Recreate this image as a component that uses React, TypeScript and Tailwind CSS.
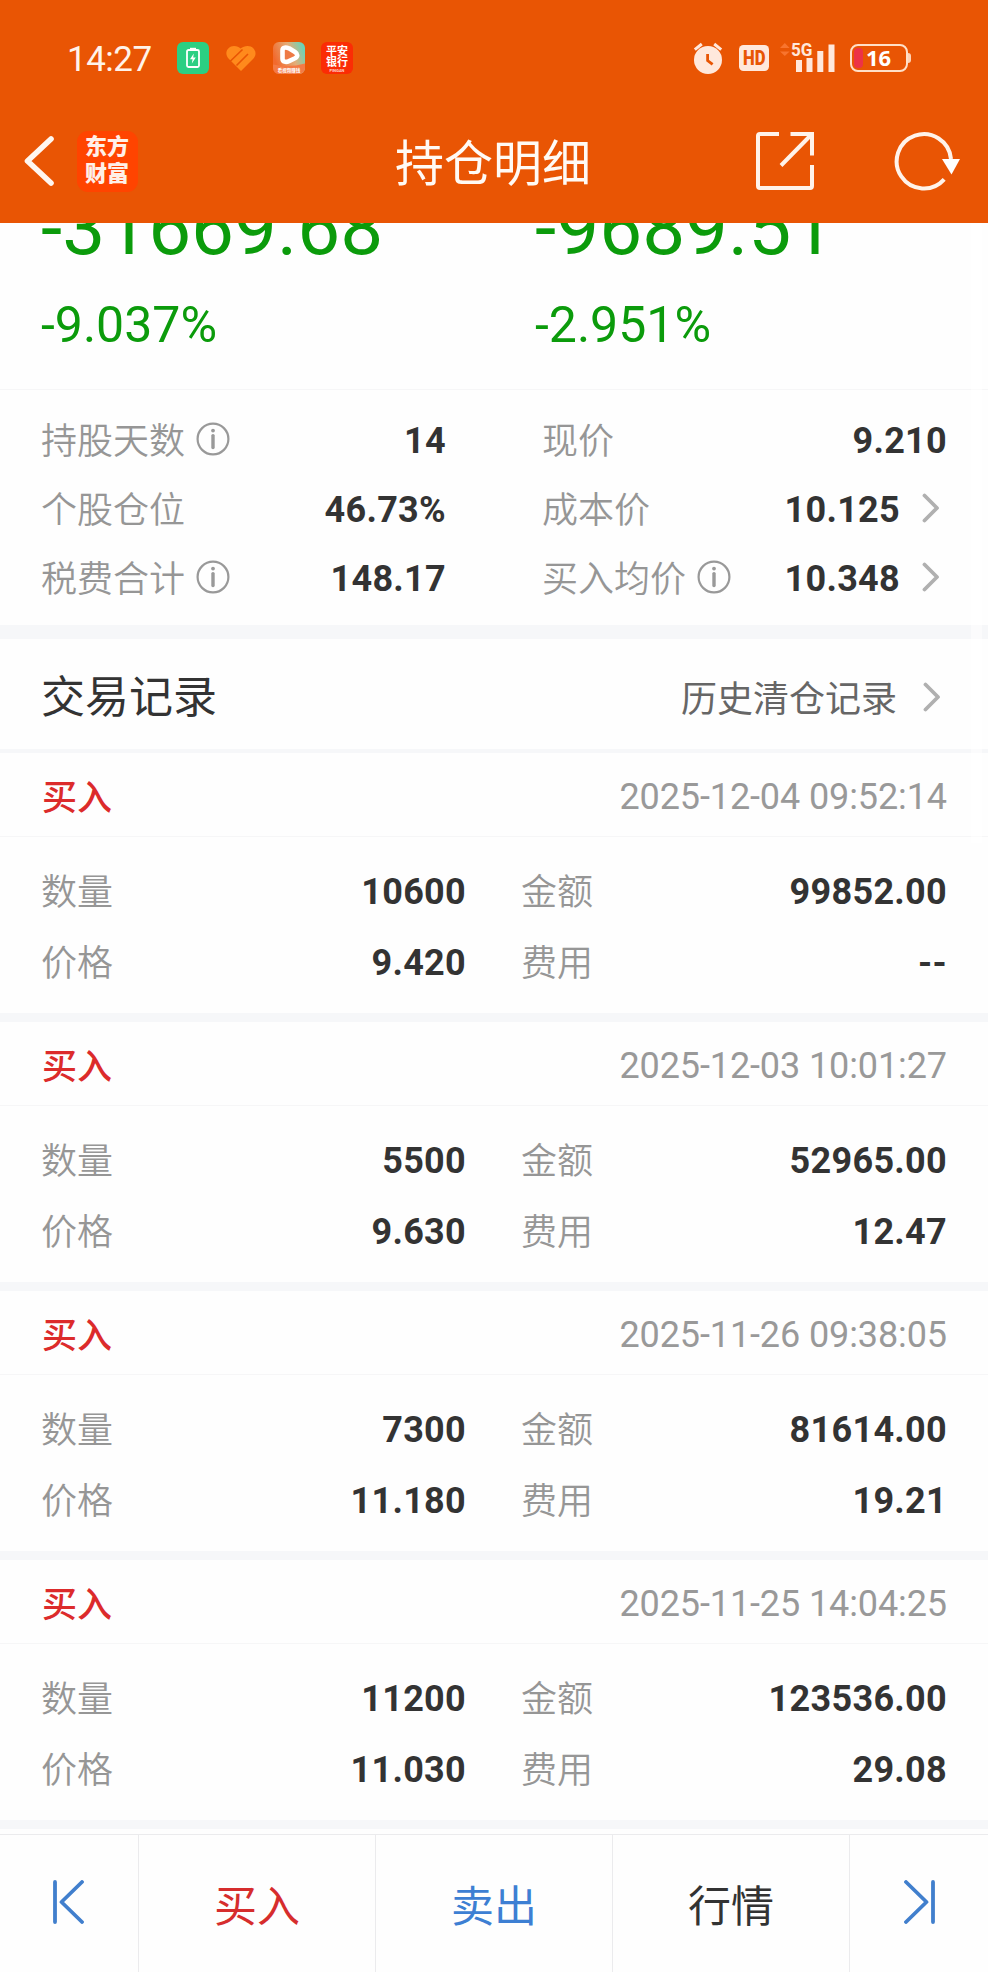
import { type ReactNode } from "react";

type Trade = {
  time: string;
  quantity: string;
  amount: string;
  price: string;
  fee: string;
};

const trades: Trade[] = [
  { time: "2025-12-04 09:52:14", quantity: "10600", amount: "99852.00", price: "9.420", fee: "--" },
  { time: "2025-12-03 10:01:27", quantity: "5500", amount: "52965.00", price: "9.630", fee: "12.47" },
  { time: "2025-11-26 09:38:05", quantity: "7300", amount: "81614.00", price: "11.180", fee: "19.21" },
  { time: "2025-11-25 14:04:25", quantity: "11200", amount: "123536.00", price: "11.030", fee: "29.08" },
];

function InfoIcon() {
  return (
    <svg width="34" height="34" viewBox="0 0 34 34" fill="none" className="mb-1 ml-[11px] shrink-0">
      <circle cx="17" cy="17" r="15.4" stroke="#999" strokeWidth="2.2" />
      <circle cx="17" cy="8.6" r="1.9" fill="#999" />
      <path d="M17 13.6v12" stroke="#999" strokeWidth="3.4" strokeLinecap="round" />
    </svg>
  );
}

function ChevronRight() {
  return (
    <svg width="18" height="30" viewBox="0 0 18 30" fill="none" className="shrink-0">
      <path d="M2.5 2.5 15 15 2.5 27.5" stroke="#b0b0b0" strokeWidth="3.8" strokeLinecap="round" strokeLinejoin="round" />
    </svg>
  );
}

function StatusBar() {
  return (
    <div className="flex h-[116px] items-center pl-[67px]">
      <span className="w-[86px] pt-0.5 text-[35px] leading-none tracking-[-0.5px] text-[#fff3ea]">14:27</span>
      <svg width="32" height="32" viewBox="0 0 32 32" fill="none" className="ml-6">
        <rect width="32" height="32" rx="6" fill="#2bcf82" />
        <rect x="10" y="8" width="12" height="17" rx="1.5" stroke="#fff" strokeWidth="1.8" />
        <path d="M13 6.8h6" stroke="#fff" strokeWidth="2" />
        <path d="M16.8 11.5 13 17.2h2.6l-.8 4.3 4-6h-2.6z" fill="#fff" />
      </svg>
      <svg width="32" height="32" viewBox="0 0 32 32" fill="none" className="ml-4">
        <path d="M3.5 16.5C-1.5 11 3 4 9 4c3 0 5 1 6.5 2.6C17.500 5 20 4 22.500 4c7 0 10.500 7.500 6 12.500L16 29z" fill="#ff8a1c" />
        <path d="M5 19.500 17.500 7.500M11.500 23.500 23 12" stroke="#e95504" strokeWidth="1.600" />
      </svg>
      <svg width="32" height="32" viewBox="0 0 32 32" fill="none" className="ml-4">
        <defs>
          <linearGradient id="video" x1="2" y1="18" x2="32" y2="6" gradientUnits="userSpaceOnUse">
            <stop stopColor="#f26a2e" />
            <stop offset=".55" stopColor="#e3ad78" />
            <stop offset="1" stopColor="#5fd8bd" />
          </linearGradient>
        </defs>
        <rect width="32" height="32" rx="6" fill="url(#video)" />
        <path d="M0 22.500Q16 26 32 21.500V26a6 6 0 0 1-6 6H6a6 6 0 0 1-6-6z" fill="#f47a45" />
        <path d="M9.500 8.300C9.500 5 13 5.200 16 6.300L22 10c3 2 3 4.500 0 6.200l-6 2.900c-3 1.500-6.500.8-6.500-2.400z" fill="#ee7a45" stroke="#fff" strokeWidth="4.600" strokeLinejoin="round" />
        <text x="16" y="30" textAnchor="middle" fontSize="4.500" fontWeight="700" fill="#fff">看视频赚钱</text>
      </svg>
      <div className="ml-4 flex h-8 w-8 flex-col items-center rounded-[6px] bg-[#fb2c05] pt-[5px] text-[11px] leading-[10.500px] font-bold text-white">
        <span>平安</span>
        <span>银行</span>
        <svg width="18" height="5" viewBox="0 0 18 5">
          <text x="9" y="4.300" textAnchor="middle" fontSize="4" fill="#ffd9cf">PINGAN</text>
        </svg>
      </div>

      <div className="ml-auto flex items-center pr-[77px]">
        <svg width="30" height="32" viewBox="0 0 30 32" fill="none">
          <circle cx="15" cy="18" r="14" fill="#ffe8dc" />
          <path d="m1.800 7.600 7-5.600M28.200 7.600l-7-5.600" stroke="#ffe8dc" strokeWidth="3" />
          <path d="M14.600 12v6.600l5 3.800" stroke="#e85504" strokeWidth="2.800" />
        </svg>
        <svg width="30" height="26" viewBox="0 0 30 26" className="ml-[16px]">
          <rect width="30" height="26" rx="4.500" fill="#ffe8dc" />
          <text x="4" y="20" fontSize="19.500" fontWeight="900" fill="#e85504" textLength="22.500" lengthAdjust="spacingAndGlyphs">HD</text>
        </svg>
        <svg width="56" height="36" viewBox="0 -2 56 36" className="ml-[11px]">
          <path d="M0 6 4.800 1 9.600 6zM0 9.500h9.600L4.800 14z" fill="#f8742e" />
          <text x="11" y="13.600" fontSize="19" fontWeight="700" fill="#ffe8dc" textLength="21.500" lengthAdjust="spacingAndGlyphs">5G</text>
          <path d="M16 18h6v12h-6zM26.500 16h6v14h-6z" fill="#ffe8dc" />
          <path d="M37.300 9h6v21h-6zM48.500 2.500h6v27.500h-6z" fill="#ffe8dc" />
        </svg>
        <div className="ml-[14px] flex h-7 w-[58px] items-center rounded-[8px] border-2 border-[#ffe0c8] pl-[2px]">
          <span className="h-5 w-[9px] rounded-[4px] bg-[#ec3346]" />
          <span className="ml-[3px] pb-[3px] font-['Open_Sans'] text-[22px] leading-none font-bold text-white">16</span>
        </div>
        <span className="h-[10px] w-[3px] rounded-r-sm bg-[#ffd3b5]" />
      </div>
    </div>
  );
}

function NavBar() {
  return (
    <div className="grid h-[90px] grid-cols-[1fr_auto_1fr] items-center">
      <div className="flex items-center pl-6">
        <svg width="32" height="50" viewBox="0 0 32 50" fill="none">
          <path d="M27 3 3.500 25 27 47" stroke="#fff6ef" strokeWidth="5.600" strokeLinecap="round" strokeLinejoin="round" />
        </svg>
        <div className="ml-[21px] flex h-[61px] w-[61px] flex-col items-center justify-center rounded-[11px] bg-[#ff4400] pr-px pb-0.5 text-[22px] leading-[27px] font-black text-[#fff0e8]">
          <span>东方</span>
          <span>财富</span>
        </div>
      </div>
      <h1 className="pt-[7px] pr-0.5 text-[49px] leading-none font-normal text-[#fffaf5]">持仓明细</h1>
      <div className="flex items-center justify-end pr-7">
        <svg width="60" height="60" viewBox="0 0 60 60" fill="none" stroke="#fff3ea" strokeWidth="4">
          <path d="M24 3H5a2 2 0 0 0-2 2v50a2 2 0 0 0 2 2h50a2 2 0 0 0 2-2V34" />
          <path d="M35.500 3H57v21.500M55.500 4.500 26 34.500" />
        </svg>
        <svg width="66" height="60" viewBox="0 0 66 60" fill="none" className="ml-[79px]">
          <path d="M50.200 48.400A27.200 27.200 0 1 1 57 28" stroke="#fff3ea" strokeWidth="4" />
          <path d="M48 28h18l-8.500 15.500z" fill="#fff" />
        </svg>
      </div>
    </div>
  );
}

function Label({ children, info }: { children: ReactNode; info?: boolean }) {
  return (
    <span className="flex items-center text-[36px] leading-none font-[350] text-[#969696]">
      <span className="pt-[3px]">{children}</span>
      {info && <InfoIcon />}
    </span>
  );
}

function Value({ children }: { children: ReactNode }) {
  return <span className="text-[36px] leading-none font-bold tracking-[0.3px] text-[#333]">{children}</span>;
}

function Stat({ label, value, info, link }: { label: string; value: string; info?: boolean; link?: boolean }) {
  return (
    <div className="flex h-[69px] items-center">
      <Label info={info}>{label}</Label>
      <div className="ml-auto flex items-center gap-[22px]">
        <Value>{value}</Value>
        {link && (
          <span className="pr-[7px] pb-1">
            <ChevronRight />
          </span>
        )}
      </div>
    </div>
  );
}

function Field({ label, value }: { label: string; value: string }) {
  return (
    <div className="flex h-[71px] items-center justify-between">
      <Label>{label}</Label>
      <Value>{value}</Value>
    </div>
  );
}

function TradeItem({ trade }: { trade: Trade }) {
  return (
    <li className="h-[269px] border-b-[9px] border-[#f6f7f9]">
      <div className="flex h-[84px] items-center justify-between border-b border-[#f6f6f7] pt-1 pr-[41px] pl-[42px]">
        <span className="pt-[3px] text-[35px] leading-none font-medium text-[#dc2b2b]">买入</span>
        <span className="text-[36px] leading-none tracking-[-0.1px] text-[#999]">{trade.time}</span>
      </div>
      <div className="grid grid-cols-[425px_1fr] gap-x-[55px] pt-[19px] pr-[41px] pl-[41px]">
        <Field label="数量" value={trade.quantity} />
        <Field label="金额" value={trade.amount} />
        <Field label="价格" value={trade.price} />
        <Field label="费用" value={trade.fee} />
      </div>
    </li>
  );
}

export default function App() {
  return (
    <div className="relative flex h-[1972px] w-[988px] flex-col overflow-hidden bg-[#fefefe] font-['Roboto','Noto_Sans_CJK_SC',sans-serif]">
      <header className="h-[223px] shrink-0 bg-[#e95504]">
        <StatusBar />
        <NavBar />
      </header>

      <section className="grid h-[167px] shrink-0 grid-cols-[494px_1fr] overflow-hidden border-b border-[#f6f6f7] pl-[41px] text-[#0b9b0b]">
        {[
          ["-31669.68", "-9.037%"],
          ["-9689.51", "-2.951%"],
        ].map(([profit, rate]) => (
          <div key={profit} className="flex flex-col">
            <span className="-mt-[34px] text-[76.500px] leading-[78px]">{profit}</span>
            <span className="mt-[33px] text-[50px] leading-[50px]">{rate}</span>
          </div>
        ))}
      </section>

      <section className="grid h-[249px] shrink-0 auto-rows-[69px] grid-cols-[405px_1fr] content-start gap-x-[96px] border-b-[14px] border-[#f6f7f9] pt-4 pr-[41px] pl-[41px]">
        <Stat label="持股天数" value="14" info />
        <Stat label="现价" value="9.210" />
        <Stat label="个股仓位" value="46.73%" />
        <Stat label="成本价" value="10.125" link />
        <Stat label="税费合计" value="148.17" info />
        <Stat label="买入均价" value="10.348" info link />
      </section>

      <div className="flex h-[114px] shrink-0 items-center justify-between border-b-4 border-[#f6f7f9] pt-[5px] pr-[47px] pl-[41px]">
        <h2 className="pt-0.5 text-[44px] leading-none font-normal text-[#333]">交易记录</h2>
        <div className="flex items-center gap-[26px] text-[36px] leading-none text-[#666]">
          <span className="pt-[7px]">历史清仓记录</span>
          <ChevronRight />
        </div>
      </div>

      <ul className="shrink-0">
        {trades.map((trade) => (
          <TradeItem key={trade.time} trade={trade} />
        ))}
      </ul>

      <nav className="mt-[5px] grid flex-1 grid-cols-[139px_237px_237px_237px_1fr] border-t border-[#ebebed] text-[43px] leading-none *:flex *:items-center *:justify-center *:border-r *:border-[#ebebed] *:last:border-r-0">
        <button className="pr-0.5 pb-1">
          <svg width="32" height="44" viewBox="0 0 32 44" fill="none" stroke="#417fcd" strokeWidth="3.800" strokeLinecap="round" strokeLinejoin="round">
            <path d="M3 2v40M30 2 9.500 22 30 42" />
          </svg>
        </button>
        <button className="pt-[7px] text-[#d62d2d]">买入</button>
        <button className="pt-[7px] text-[#3d7fd3]">卖出</button>
        <button className="pt-[7px] text-[#333]">行情</button>
        <button className="pb-1 pl-0.5">
          <svg width="32" height="44" viewBox="0 0 32 44" fill="none" stroke="#417fcd" strokeWidth="3.800" strokeLinecap="round" strokeLinejoin="round">
            <path d="M29 2v40M2 2l20.500 20L2 42" />
          </svg>
        </button>
      </nav>

      {/* scrollbar track, only noticeable where it crosses the grey dividers */}
      <div className="absolute top-[223px] left-[971px] h-[620px] w-[11px] bg-white/50" />
    </div>
  );
}
